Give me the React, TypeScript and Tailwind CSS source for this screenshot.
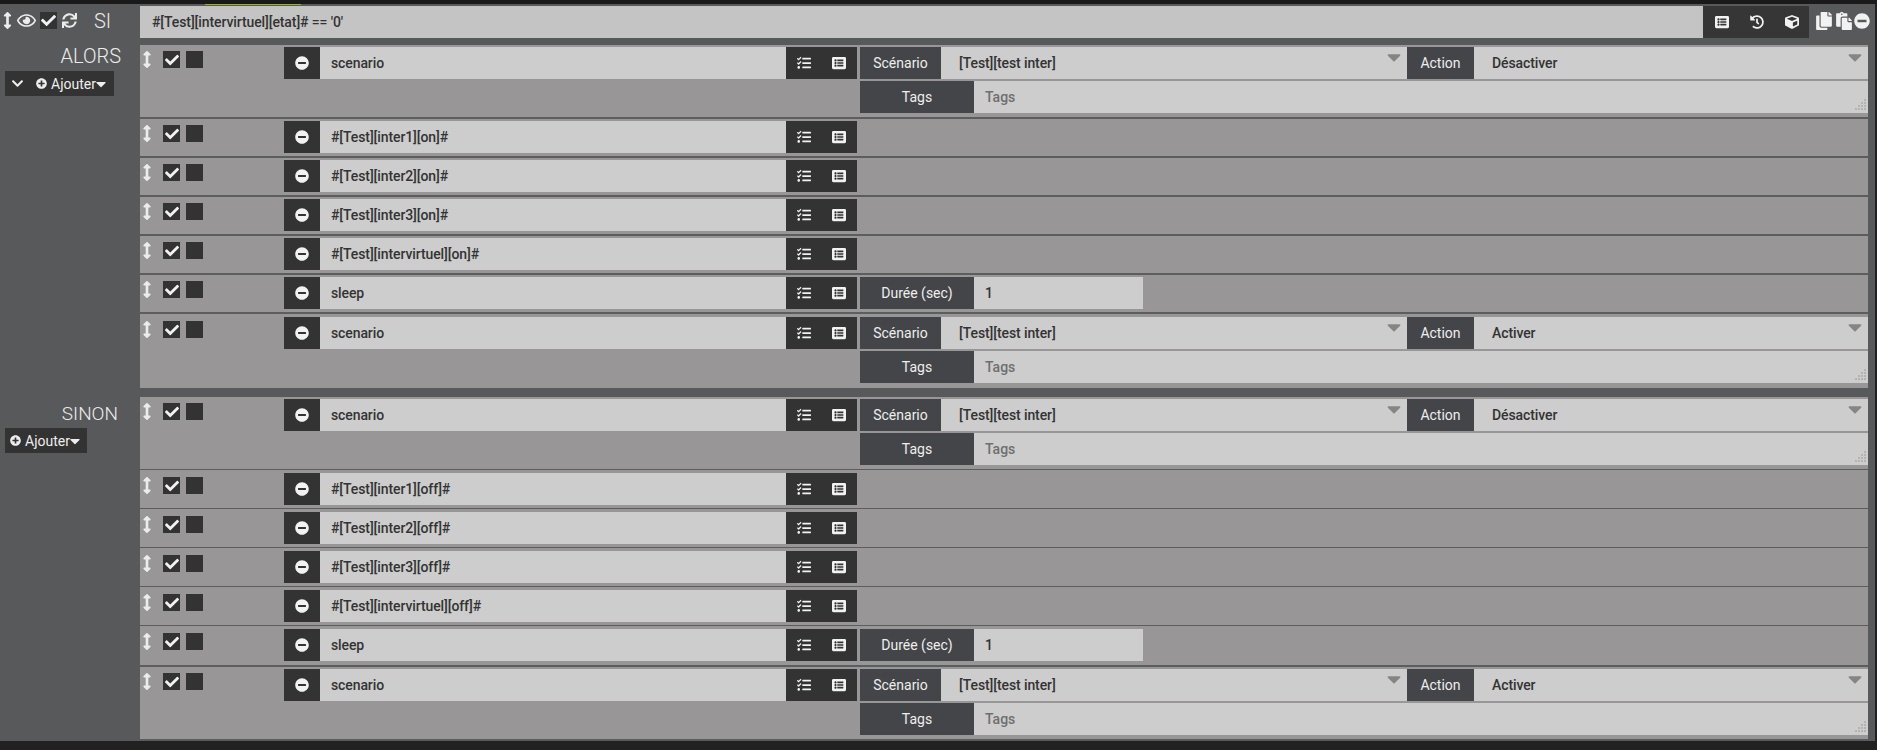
import {
  FaArrowsAltV,
  FaCaretDown,
  FaCheck,
  FaChevronDown,
  FaCopy,
  FaCube,
  FaHistory,
  FaListAlt,
  FaMinusCircle,
  FaPaste,
  FaPlusCircle,
  FaRegEye,
  FaSync,
  FaTasks,
} from 'react-icons/fa'

type RowData = {
  kind: 'scenario' | 'sleep' | 'plain'
  text: string
  action?: string
  className: string
}

const alors: RowData[] = [
  { kind: 'scenario', text: 'scenario', action: 'Désactiver', className: 'pt-[2px] pb-[4px] border-b-2' },
  { kind: 'plain', text: '#[Test][inter1][on]#', className: 'pt-[2px] pb-[3px] border-b-2' },
  { kind: 'plain', text: '#[Test][inter2][on]#', className: 'pt-[2px] pb-[3px] border-b-2' },
  { kind: 'plain', text: '#[Test][inter3][on]#', className: 'pt-[2px] pb-[3px] border-b-2' },
  { kind: 'plain', text: '#[Test][intervirtuel][on]#', className: 'pt-[2px] pb-[3px] border-b-2' },
  { kind: 'sleep', text: 'sleep', className: 'pt-[2px] pb-[3px] border-b-2' },
  { kind: 'scenario', text: 'scenario', action: 'Activer', className: 'pt-[3px] pb-[5px]' },
]

const sinon: RowData[] = [
  { kind: 'scenario', text: 'scenario', action: 'Désactiver', className: 'pt-[2px] pb-[4px] border-b' },
  { kind: 'plain', text: '#[Test][inter1][off]#', className: 'pt-[3px] pb-[3px] border-b' },
  { kind: 'plain', text: '#[Test][inter2][off]#', className: 'pt-[3px] pb-[3px] border-b' },
  { kind: 'plain', text: '#[Test][inter3][off]#', className: 'pt-[3px] pb-[3px] border-b' },
  { kind: 'plain', text: '#[Test][intervirtuel][off]#', className: 'pt-[3px] pb-[3px] border-b' },
  { kind: 'sleep', text: 'sleep', className: 'pt-[3px] pb-[4px] border-b-2' },
  { kind: 'scenario', text: 'scenario', action: 'Activer', className: 'pt-[2px] pb-[4px] border-b' },
]

function CheckBox({ checked }: { checked?: boolean }) {
  return (
    <div className="w-[17px] h-[17px] bg-[#333333] flex items-center justify-center text-[#f2f2f2]">
      {checked && <FaCheck size={14} />}
    </div>
  )
}

function Label({ children, className }: { children: string; className: string }) {
  return (
    <div className={`h-[32px] bg-[#444548] text-[#eeeeee] flex items-center justify-center shrink-0 ${className}`}>
      {children}
    </div>
  )
}

function Select({ value, className }: { value: string; className: string }) {
  return (
    <div className={`relative h-[32px] bg-[#cdcdcd] flex items-center pl-[18px] font-medium tracking-[-0.1px] text-[#333333] ${className}`}>
      {value}
      <FaCaretDown size={22} className="absolute right-[2px] top-[-1px] text-[#858585]" />
    </div>
  )
}

function ScenarioFields({ action }: { action: string }) {
  return (
    <div className="flex-1 flex flex-col gap-[2px]">
      <div className="flex">
        <Label className="w-[81px]">Scénario</Label>
        <Select value="[Test][test inter]" className="w-[466px]" />
        <Label className="w-[67px]">Action</Label>
        <Select value={action} className="flex-1" />
      </div>
      <div className="flex">
        <Label className="w-[114px]">Tags</Label>
        <div className="relative flex-1 h-[32px] bg-[#cdcdcd] flex items-center pl-[11px] font-medium text-[#6f6f6f]">
          Tags
          <svg width="12" height="12" viewBox="0 0 12 12" className="absolute right-[1px] bottom-[2px] text-[#b3b3b3]">
            <g fill="currentColor">
              <rect x="9" y="0" width="2" height="2" />
              <rect x="6" y="3" width="2" height="2" />
              <rect x="9" y="3" width="2" height="2" />
              <rect x="3" y="6" width="2" height="2" />
              <rect x="6" y="6" width="2" height="2" />
              <rect x="9" y="6" width="2" height="2" />
              <rect x="0" y="9" width="2" height="2" />
              <rect x="3" y="9" width="2" height="2" />
              <rect x="6" y="9" width="2" height="2" />
              <rect x="9" y="9" width="2" height="2" />
            </g>
          </svg>
        </div>
      </div>
    </div>
  )
}

function ActionRow({ row }: { row: RowData }) {
  return (
    <div className={`flex items-start bg-[#989696] border-[#5c5d5d] ${row.className}`}>
      <div className="w-[144px] shrink-0 flex items-start">
        <FaArrowsAltV size={17} className="ml-[2px] mt-[4px] w-[10px] text-[#ececec]" />
        <div className="ml-[11px] mt-[4px] flex gap-[6px]">
          <CheckBox checked />
          <CheckBox />
        </div>
      </div>
      <div className="w-[36px] h-[32px] bg-[#333333] flex items-center justify-center text-[#f2f2f2] shrink-0">
        <FaMinusCircle size={14} />
      </div>
      <div className="w-[466px] h-[32px] bg-[#cdcdcd] flex items-center pl-[11px] font-medium tracking-[-0.1px] text-[#333333] shrink-0">
        {row.text}
      </div>
      <div className="w-[71px] h-[32px] bg-[#333333] flex items-center gap-[21px] pl-[11px] text-[#f2f2f2] shrink-0">
        <FaTasks size={14} />
        <FaListAlt size={14} />
      </div>
      <div className="ml-[3px] flex-1">
        {row.kind === 'scenario' && <ScenarioFields action={row.action ?? ''} />}
        {row.kind === 'sleep' && (
          <div className="flex">
            <Label className="w-[114px]">Durée (sec)</Label>
            <div className="w-[169px] h-[32px] bg-[#cdcdcd] flex items-center pl-[11px] font-medium text-[#333333]">1</div>
          </div>
        )}
        {row.kind === 'plain' && <div className="h-[32px]" />}
      </div>
    </div>
  )
}

function AddButton({ chevron }: { chevron?: boolean }) {
  return (
    <div className={`ml-[5px] h-[25px] w-fit bg-[#333333] flex items-center pl-[5px] text-[#eeeeee] ${chevron ? 'pr-[5px]' : 'pr-[4px]'}`}>
      {chevron && <FaChevronDown size={13} className="ml-[1px] mr-[12px]" />}
      <FaPlusCircle size={11} className="mr-[4px]" />
      <span>Ajouter</span>
      <FaCaretDown size={16} className="ml-[-3px]" />
    </div>
  )
}

export default function App() {
  return (
    <div className="min-h-[750px] bg-[#212121] text-[14px] leading-none font-['Roboto',sans-serif]">
      <div className="h-[4px] bg-[#1a1a1a]" />
      <div className="mr-[2px] bg-[#58595b] pb-[1px]">
        <div className="ml-[205px] w-[96px] h-[1px] bg-[#8fb81f]" />
        <div className="flex items-start h-[40px] pt-[1px]">
          <div className="w-[140px] shrink-0 h-[32px] text-[#ececec]">
            <div className="flex items-center pl-[3px] pt-[3px]">
              <FaArrowsAltV size={17} className="w-[9px]" />
              <FaRegEye size={19} className="ml-[5px]" />
              <div className="ml-[4px] w-[17px] h-[17px] bg-[#333333] flex items-center justify-center text-[#f2f2f2]">
                <FaCheck size={15} />
              </div>
              <FaSync size={15} className="ml-[5px]" />
              <span className="ml-[17px] mt-[2px] text-[20px] font-light">SI</span>
            </div>
          </div>
          <div className="w-[1563px] h-[32px] bg-[#c4c4c4] flex items-center pl-[12px] font-medium tracking-[-0.1px] text-[#333333]">
            {"#[Test][intervirtuel][etat]# == '0'"}
          </div>
          <div className="w-[106px] h-[32px] bg-[#363636] flex items-center gap-[21px] pl-[12px] text-[#f2f2f2]">
            <FaListAlt size={14} />
            <FaHistory size={14} />
            <FaCube size={14} />
          </div>
          <div className="flex items-center pl-[6px] pt-[6px] gap-[2px] text-[#f2f2f2]">
            <FaCopy size={18} />
            <FaPaste size={18} />
            <FaMinusCircle size={16} className="ml-[-1px]" />
          </div>
        </div>

        <div className="flex pb-[9px]">
          <div className="w-[140px] shrink-0">
            <div className="h-[26px] pb-[4px] pr-[19px] flex items-center justify-end text-[20px] font-light text-[#ececec]">ALORS</div>
            <AddButton chevron />
          </div>
          <div className="w-[1728px]">
            {alors.map((row, i) => (
              <ActionRow key={i} row={row} />
            ))}
          </div>
        </div>

        <div className="flex">
          <div className="w-[140px] shrink-0">
            <div className="h-[31px] pt-[1px] pr-[22px] flex items-center justify-end text-[19px] font-light text-[#ececec]">SINON</div>
            <AddButton />
          </div>
          <div className="w-[1728px]">
            {sinon.map((row, i) => (
              <ActionRow key={i} row={row} />
            ))}
          </div>
        </div>
      </div>
    </div>
  )
}
